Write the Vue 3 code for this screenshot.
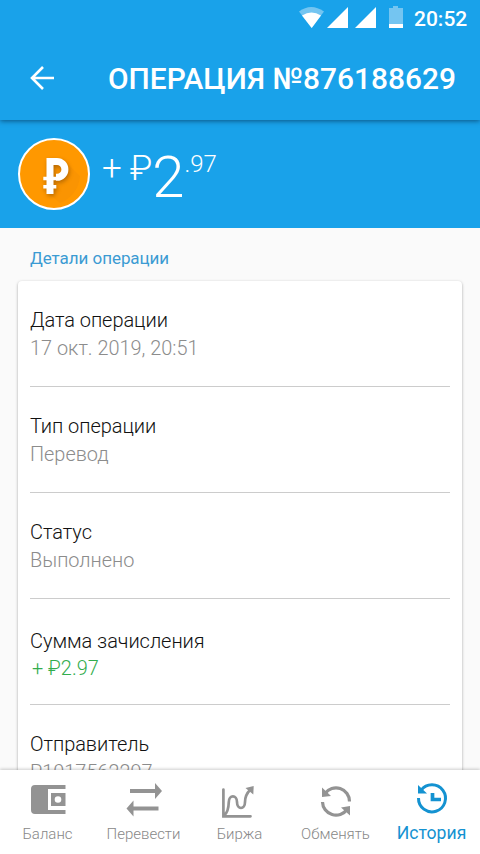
<script setup>
const rows = [
  { label: 'Дата операции', value: '17 окт. 2019, 20:51', kind: 'date' },
  { label: 'Тип операции', value: 'Перевод', kind: 'type' },
  { label: 'Статус', value: 'Выполнено', kind: 'state' },
  { label: 'Сумма зачисления', value: '+ ₽2.97', kind: 'sum' },
  { label: 'Отправитель', value: 'P1017562297', kind: 'sender' },
]
</script>

<template>
  <div class="screen">
    <header class="top">
      <div class="status">
        <svg class="indicators" width="106" height="22" viewBox="0 0 106 22">
          <path d="M0 5.500Q12 -3.500 25 5.500L12.700 22Z" fill="#74c5f1" />
          <path d="M3 9.500Q12.500 3.500 22 9.500L12.700 22Z" fill="#fff" />
          <path d="M49 1V22H28ZM77 1V22H56Z" fill="#fff" />
          <path d="M90 2H94V0H99V2H104V18H90Z" fill="#74c5f1" />
          <path d="M90 18H104V22H90Z" fill="#fff" />
        </svg>
        <span class="clock">20:52</span>
      </div>
      <div class="bar">
        <svg class="back" width="26" height="26" viewBox="0 0 26 26" fill="none" stroke="#fff" stroke-width="2.600">
          <path d="M25 13H3.500M14 2L3 13L14 24" />
        </svg>
        <h1>ОПЕРАЦИЯ №876188629</h1>
      </div>
    </header>

    <section class="hero">
      <div class="coin">
        <svg width="68" height="68" viewBox="0 0 68 68">
          <path d="M33 19L47 23L60 36A31 31 0 0 1 40 63L26 51Z" fill="#f08a08" opacity=".3" />
          <g class="coin-sign" fill="none" stroke="#fff" stroke-width="7">
            <path d="M30 54V18M30 21.500H37A7.900 7.900 0 0 1 37 37.300H36" />
            <path d="M23.300 38.500H36.300M23.300 46.700H36.300" stroke-width="3.500" />
          </g>
        </svg>
      </div>
      <div class="amount">
        <span class="plus">+</span><span class="currency">₽</span><span class="whole">2</span><span class="cents">.97</span>
      </div>
    </section>

    <main>
      <h2>Детали операции</h2>
      <div class="card">
        <div v-for="row in rows" :key="row.kind" class="row" :class="row.kind">
          <div class="label">{{ row.label }}</div>
          <div class="value">{{ row.value }}</div>
        </div>
      </div>
    </main>

    <nav>
      <a class="tab balance">
        <svg width="40" height="36" viewBox="0 0 40 36">
          <path d="M7 3H37.500V7H20V28H37.500V32H7Q3 32 3 28V7Q3 3 7 3Z" fill="#939393" />
          <path fill-rule="evenodd" d="M23 11H37.500V24H23ZM30 14.200A3.300 3.300 0 1 0 30 20.800A3.300 3.300 0 1 0 30 14.200Z" fill="#939393" />
        </svg>
        <span>Баланс</span>
      </a>
      <a class="tab transfer">
        <svg width="40" height="36" viewBox="0 0 40 36" fill="#939393">
          <path d="M6 7H31V1L38 9L31 17V11H6ZM34.500 24.500H9.500V18.500L2.500 26.500L9.500 34.500V28.500H34.500Z" />
        </svg>
        <span>Перевести</span>
      </a>
      <a class="tab exchange">
        <svg width="40" height="36" viewBox="0 0 40 36" fill="none" stroke="#939393" stroke-width="2.700" stroke-linecap="round">
          <path d="M3.400 7.500V34.300H30.500M4.500 33C8 30 8.600 26 8.800 20C8.800 12.500 17 12.500 17 20C17 28 25 28 25 20C25 14 27 11 30 8" />
          <path d="M25.500 6L33.700 4L33.300 12.500Z" fill="#939393" stroke="none" />
        </svg>
        <span>Биржа</span>
      </a>
      <a class="tab swap">
        <svg width="40" height="36" viewBox="0 0 40 36" fill="none" stroke="#939393" stroke-width="3.200">
          <path d="M9 11.500A13.500 13.500 0 0 1 33.500 19.500M6.500 20A13.500 13.500 0 0 0 31 27.500" />
          <path d="M6 5.500V15L15 14ZM34 33.500V24L25 25.500Z" fill="#939393" stroke="none" />
        </svg>
        <span>Обменять</span>
      </a>
      <a class="tab history active">
        <svg width="40" height="36" viewBox="0 0 40 36" fill="none" stroke="#1492d1" stroke-width="3">
          <path d="M9 8.500A13.500 13.500 0 1 1 6.500 16" />
          <path d="M6 3V11.500H15Z" fill="#1492d1" stroke="none" />
          <path d="M20.500 11V17.500H29" stroke-width="3.700" />
        </svg>
        <span>История</span>
      </a>
    </nav>
  </div>
</template>

<style>
body {
  margin: 0;
  overflow: hidden;
}
</style>

<style scoped>
.screen {
  width: 480px;
  height: 854px;
  display: flex;
  flex-direction: column;
  overflow: hidden;
  background: #fafafa;
  font-family: Roboto, "Noto Sans", sans-serif;
}
.top {
  flex: none;
  height: 120px;
  background: #19a2ea;
  color: #fff;
  z-index: 1;
  box-shadow: 0 1px 5px rgba(0, 30, 60, .6);
}
.status {
  height: 36px;
  display: flex;
  justify-content: flex-end;
  padding: 6px 12px 0 0;
  box-sizing: border-box;
}
.indicators {
  margin-right: 9px;
}
.clock {
  font-size: 21px;
  line-height: 26px;
  font-weight: 500;
  width: 54px;
  white-space: nowrap;
}
.bar {
  height: 84px;
  display: flex;
  align-items: center;
}
.back {
  margin-left: 29px;
}
h1 {
  margin: 2px 0 0 53px;
  font-size: 29.9px;
  font-weight: 500;
  line-height: 36px;
  white-space: nowrap;
}
.hero {
  flex: none;
  height: 108px;
  box-sizing: border-box;
  padding: 18px 0 0 18px;
  background: #19a2ea;
  display: flex;
  align-items: flex-start;
  color: #fff;
}
.coin {
  width: 68px;
  height: 68px;
  border: 2px solid #fff;
  border-radius: 50%;
  background: #ff9800;
  overflow: hidden;
}
.coin-sign {
  filter: drop-shadow(1px 2px 2px rgba(100, 50, 0, .45));
}
.amount {
  display: flex;
  align-items: flex-start;
  font-weight: 300;
  margin-left: 12px;
}
.plus,
.currency {
  font-size: 35px;
  line-height: 40px;
  margin-top: 11px;
}
.currency {
  margin-left: 8px;
}
.whole {
  font-size: 58px;
  line-height: 60px;
  margin-top: 9px;
}
.cents {
  font-size: 24px;
  line-height: 30px;
  margin-top: 11px;
}
main {
  flex: 1;
  min-height: 0;
  overflow: hidden;
}
h2 {
  margin: 19px 30px 12px;
  color: #3b9bd3;
  font-size: 17px;
  line-height: 22px;
  font-weight: 400;
  letter-spacing: -.05px;
}
.card {
  margin: 0 18px;
  padding: 0 12px;
  background: #fff;
  border-radius: 4px;
  box-shadow: 0 1px 3px rgba(0, 0, 0, .35);
}
.row {
  height: 106px;
  box-sizing: border-box;
  padding-top: 25px;
  border-bottom: 1px solid #ccc;
}
.label {
  font-size: 20px;
  line-height: 28px;
  font-weight: 350;
  letter-spacing: -.05px;
  color: #111;
}
.value {
  margin-top: 1px;
  font-size: 19.9px;
  line-height: 28px;
  font-weight: 300;
  color: #8c8c8c;
}
.sum {
  padding-top: 28px;
}
.sum .value {
  color: #32ad4d;
  line-height: 26px;
  padding-left: 2px;
}
nav {
  flex: none;
  height: 84px;
  display: grid;
  grid-template-columns: repeat(5, 1fr);
  background: #fff;
  z-index: 1;
  box-shadow: 0 -1px 3px rgba(0, 0, 0, .2);
}
.tab {
  display: flex;
  flex-direction: column;
  align-items: center;
  padding-top: 12px;
  color: #888;
  font-size: 15px;
  line-height: 20px;
  font-weight: 300;
  white-space: nowrap;
}
.tab span {
  margin: 6px 1px 0 0;
}
.active {
  color: #1492d1;
  font-size: 17.6px;
  font-weight: 400;
}
.active span {
  margin-top: 5px;
}
</style>
